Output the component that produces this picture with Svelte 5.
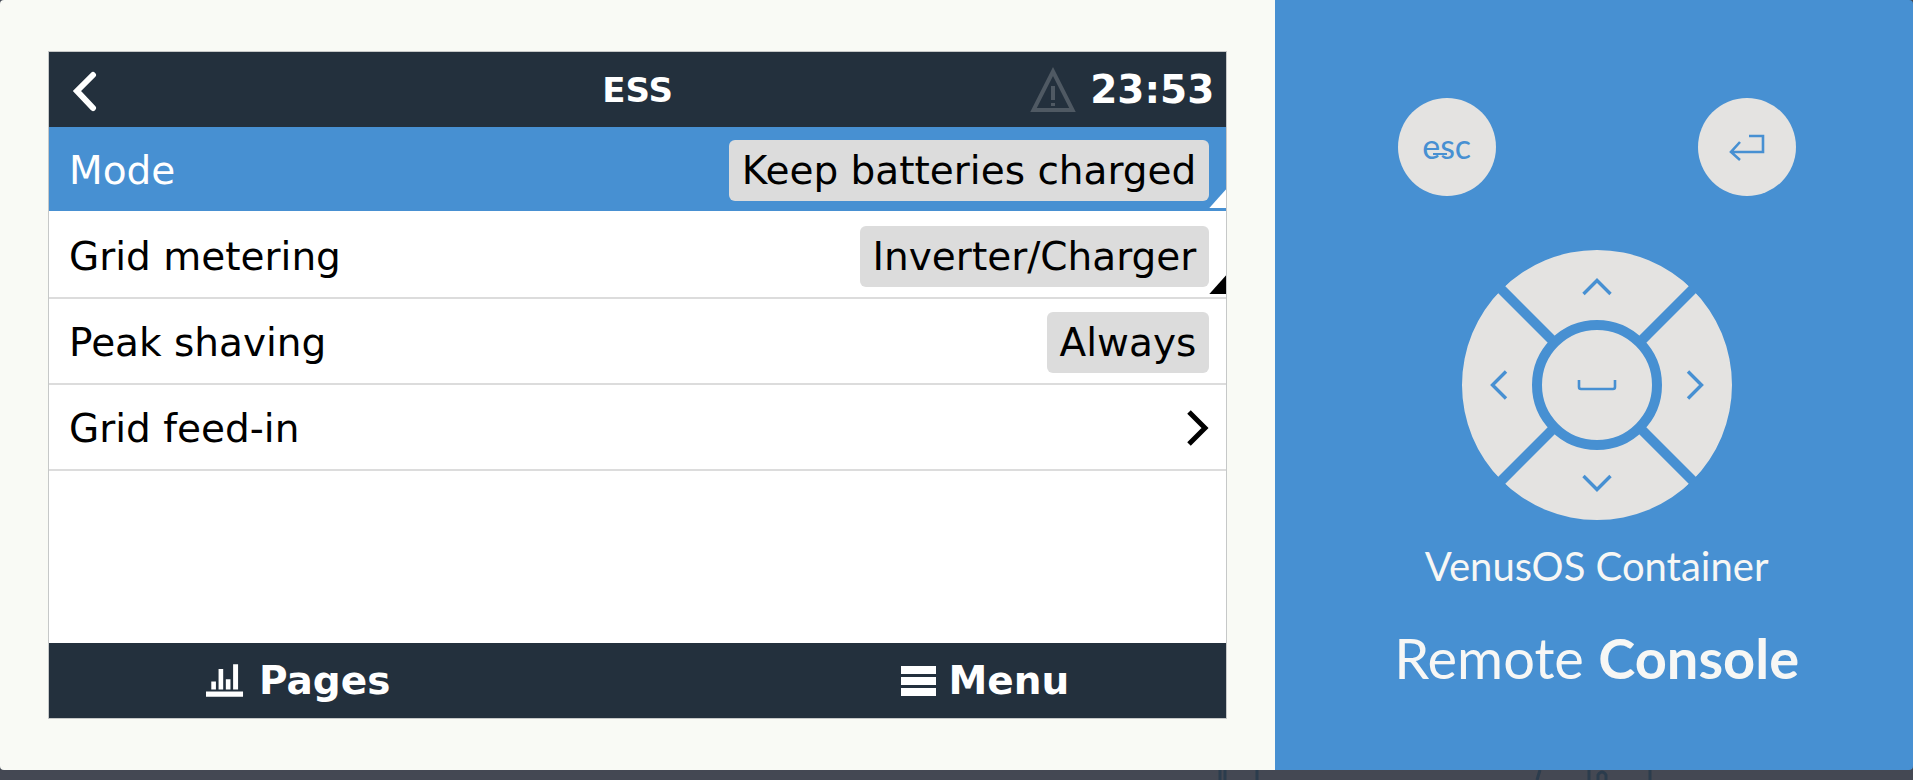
<script lang="ts">
  type Row = {
    label: string;
    value?: string;
    editable?: boolean;
  };

  const rows: Row[] = [
    { label: "Mode", value: "Keep batteries charged", editable: true },
    { label: "Grid metering", value: "Inverter/Charger", editable: true },
    { label: "Peak shaving", value: "Always" },
    { label: "Grid feed-in" },
  ];

  // order follows the 2x2 grid of the rotated dial
  const arrows = [
    { dir: "up", label: "Up" },
    { dir: "right", label: "Right" },
    { dir: "left", label: "Left" },
    { dir: "down", label: "Down" },
  ];

  let selected = $state(0);

  function press(dir: string) {
    if (dir === "up") selected = Math.max(0, selected - 1);
    if (dir === "down") selected = Math.min(rows.length - 1, selected + 1);
  }
</script>

<div class="page">
  <main class="device">
    <section class="bezel">
      <div class="lcd">
        <header class="bar">
          <button class="back" aria-label="Back">
            <svg width="28" height="42" viewBox="0 0 28 42">
              <path d="M22 5 L6 21 L22 38" fill="none" stroke="#fff" stroke-width="6" stroke-linecap="round" />
            </svg>
          </button>
          <h1>ESS</h1>
          <div class="status">
            <svg width="46" height="46" viewBox="0 0 46 46">
              <path d="M23 4.5 L42.5 43 H3.5 Z" fill="none" stroke="#4f5963" stroke-width="4" />
              <path d="M23 19 V33 M23 36 V39" stroke="#4f5963" stroke-width="4" />
            </svg>
            <time>23:53</time>
          </div>
        </header>

        <ul class="rows">
          {#each rows as row, i}
            <li>
              <button class="row" class:selected={i === selected} onclick={() => (selected = i)}>
                <span>{row.label}</span>
                {#if row.value}
                  <span class="value">{row.value}</span>
                {:else}
                  <svg width="24" height="40" viewBox="0 0 24 40">
                    <path d="M4 4 L20 20 L4 36" fill="none" stroke="currentColor" stroke-width="5" />
                  </svg>
                {/if}
                {#if row.editable}
                  <span class="corner"></span>
                {/if}
              </button>
            </li>
          {/each}
        </ul>

        <footer class="bar tabs">
          <button class="tab">
            <svg width="41" height="33" viewBox="0 0 124 98">
              <path d="M0 82h112v16H0z M16 52h14v24H16z M38 14h14v62H38z M60 45h14v31H60z M82 0h15v76H82z" fill="#fff" />
            </svg>
            Pages
          </button>
          <button class="tab">
            <svg width="36" height="30" viewBox="0 0 36 30">
              <path d="M0 0h35v8H0z M0 11h35v8H0z M0 22h35v8H0z" fill="#fff" />
            </svg>
            Menu
          </button>
        </footer>
      </div>
    </section>

    <aside class="remote">
      <div class="keys">
        <button class="key esc">esc</button>
        <button class="key" aria-label="Enter">
          <svg width="36" height="27" viewBox="0 0 36 27">
            <path d="M20 2 H34 V18 H2 M11 8 L2 18 L11 26" fill="none" stroke="#4790d2" stroke-width="2.6" />
          </svg>
        </button>
      </div>

      <div class="dial">
        <div class="arrows">
          {#each arrows as arrow}
            <button class="arrow" aria-label={arrow.label} onclick={() => press(arrow.dir)}>
              <svg class={arrow.dir} width="32" height="32" viewBox="0 0 32 32">
                <path d="M2.5 24 L16 10.5 L29.5 24" fill="none" stroke="#4790d2" stroke-width="3.4" />
              </svg>
            </button>
          {/each}
        </div>
        <button class="space" aria-label="Space">
          <svg width="40" height="12" viewBox="0 0 40 12">
            <path d="M2 1 V8 Q2 10 4 10 H36 Q38 10 38 8 V1" fill="none" stroke="#4790d2" stroke-width="2.6" />
          </svg>
        </button>
      </div>

      <p class="name">VenusOS Container</p>
      <p class="brand">Remote <strong>Console</strong></p>
    </aside>
  </main>

  <svg class="backdrop" viewBox="0 0 1913 10" aria-hidden="true">
    <path
      d="M1220 0v10 M1225 0v10 M1257 0v10 M1540 0l-3 10 M1589 0v10 M1598 10v-5q4 -6 8 0v5 M1650 0v10"
      fill="none"
      stroke="#2b3c4d"
      stroke-width="3"
    />
  </svg>
</div>

<style>
  :global(body) {
    background: #444853;
  }

  .page {
    display: flex;
    flex-direction: column;
    min-height: 100vh;
    font-family: "DejaVu Sans", sans-serif;
    font-size: 39px;
  }

  button {
    margin: 0;
    padding: 0;
    border: 0;
    background: none;
    color: inherit;
    font: inherit;
    cursor: pointer;
  }

  svg {
    display: block;
  }

  .device {
    flex: 1;
    display: grid;
    grid-template-columns: 2fr 1fr;
    border-radius: 4px;
    overflow: hidden;
  }

  .bezel {
    display: flex;
    padding: 51px 48px;
    background: #f9faf5;
  }

  .lcd {
    flex: 1;
    display: flex;
    flex-direction: column;
    border: 1px solid #c6c8c8;
    background: #fff;
  }

  .bar {
    height: 75px;
    background: #23303d;
    color: #fff;
    font-weight: bold;
  }

  header.bar {
    display: grid;
    grid-template-columns: 1fr auto 1fr;
    align-items: center;
    padding: 0 12px;
  }

  .back {
    justify-self: start;
    padding: 2px 10px 0;
  }

  h1 {
    margin: 0;
    font-size: 34px;
  }

  .status {
    display: flex;
    align-items: center;
    justify-content: flex-end;
    gap: 14px;
  }

  .rows {
    flex: 1;
    margin: 0;
    padding: 0;
    list-style: none;
  }

  .row {
    position: relative;
    display: flex;
    align-items: center;
    justify-content: space-between;
    width: 100%;
    height: 86px;
    padding: 2px 17px 0 20px;
    border-bottom: 2px solid #dcdcdc;
    color: #000;
  }

  .row.selected {
    border-bottom-color: #fff;
    background: #4790d2;
    background-clip: padding-box;
    color: #fff;
  }

  .value {
    padding: 0 13px;
    border-radius: 6px;
    background: #dcdcdc;
    color: #000;
    line-height: 61px;
  }

  .corner {
    position: absolute;
    right: 0;
    bottom: 3px;
    width: 17px;
    height: 19px;
    background: currentColor;
    clip-path: polygon(100% 0, 100% 100%, 0 100%);
  }

  .tabs {
    display: flex;
    align-items: center;
    justify-content: space-between;
    padding: 0 157px;
  }

  .tab {
    display: flex;
    align-items: center;
    gap: 12px;
  }

  .remote {
    display: flex;
    flex-direction: column;
    align-items: center;
    padding: 98px 0 0 5px;
    background: #4790d2;
    color: #f7f7f5;
    font-family: Lato, sans-serif;
  }

  .keys {
    display: flex;
    gap: 202px;
  }

  .key {
    position: relative;
    display: grid;
    place-items: center;
    width: 98px;
    height: 98px;
    border-radius: 50%;
    background: #e4e3e1;
  }

  .esc {
    padding-bottom: 4px;
    color: #4790d2;
    font-size: 34px;
  }

  .esc::after {
    content: "";
    position: absolute;
    left: 35px;
    top: 55px;
    width: 14px;
    height: 2px;
    background: #4790d2;
  }

  .dial {
    position: relative;
    display: grid;
    place-items: center;
    margin-top: 54px;
  }

  .arrows {
    display: grid;
    grid-template-columns: 1fr 1fr;
    grid-template-rows: 1fr 1fr;
    gap: 10px;
    width: 270px;
    height: 270px;
    border-radius: 50%;
    overflow: hidden;
    transform: rotate(45deg);
  }

  .arrow {
    display: grid;
    place-items: center;
    background: #e4e3e1;
  }

  .up {
    transform: rotate(-45deg);
  }

  .right {
    transform: rotate(45deg);
  }

  .left {
    transform: rotate(-135deg);
  }

  .down {
    transform: rotate(135deg);
  }

  .space {
    position: absolute;
    display: grid;
    place-items: center;
    width: 130px;
    height: 130px;
    border: 10px solid #4790d2;
    border-radius: 50%;
    background: #e4e3e1;
  }

  .name {
    margin: 22px 0 0;
    font-size: 40px;
    line-height: 48px;
  }

  .brand {
    margin: 36px 0 0;
    font-size: 56px;
    line-height: 64px;
  }

  .brand strong {
    font-weight: 700;
  }

  .backdrop {
    width: 100%;
  }
</style>
